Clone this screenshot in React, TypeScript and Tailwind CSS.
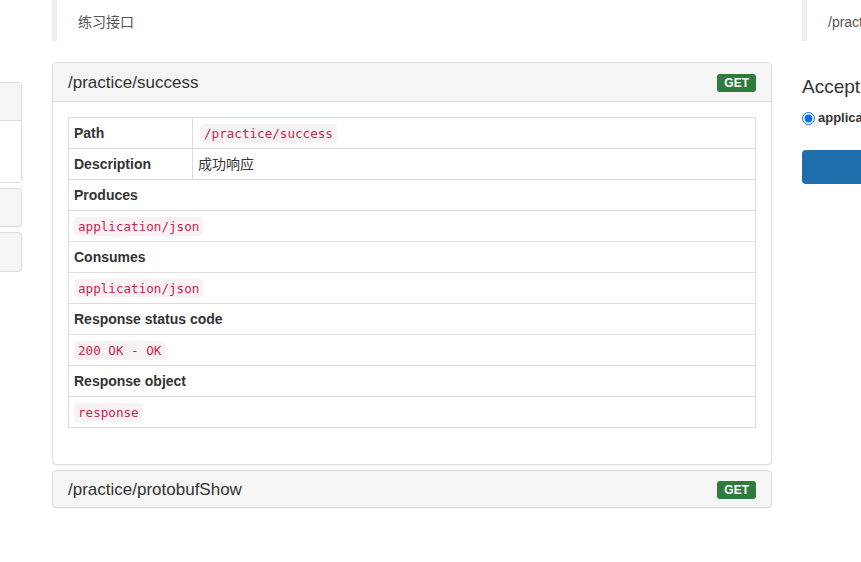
import React from "react";

const mono = { fontFamily: '"DejaVu Sans Mono", "Liberation Mono", monospace' };

function Code({ children }: { children: React.ReactNode }) {
  return (
    <code
      style={mono}
      className="rounded-[4px] bg-[#f9f2f4] px-[4px] py-[2px] text-[12.6px] text-[#c7254e]"
    >
      {children}
    </code>
  );
}

function GetBadge() {
  return (
    <span className="rounded-[3px] bg-[#2f7b3e] px-[7px] py-[3px] text-[12px] font-bold leading-none text-white">
      GET
    </span>
  );
}

function FullRow({ children, bold }: { children: React.ReactNode; bold?: boolean }) {
  return (
    <tr className="border-t border-[#ddd]">
      <td colSpan={2} className={`h-[31px] px-[5px] align-middle ${bold ? "font-bold" : ""}`}>
        {children}
      </td>
    </tr>
  );
}

export default function App() {
  return (
    <div
      className="flex h-[562px] w-[861px] overflow-hidden bg-white text-[14px] leading-[20px] text-[#333]"
      style={{ fontFamily: '"Liberation Sans", Arial, "Noto Sans CJK SC", sans-serif' }}
    >
      {/* left sidebar */}
      <div className="mt-[82px] flex w-[22px] shrink-0 flex-col gap-[5px]">
        <div className="rounded-r-[4px] border border-l-0 border-[#ddd]">
          <div className="h-[38px] border-b border-[#ddd] bg-[#f5f5f5]" />
          <div className="h-[61px] bg-white" />
        </div>
        <div className="h-[39px] rounded-r-[4px] border border-l-0 border-[#ddd] bg-[#f5f5f5]" />
        <div className="h-[40px] rounded-r-[4px] border border-l-0 border-[#ddd] bg-[#f5f5f5]" />
      </div>

      {/* main column */}
      <div className="ml-[30px] flex w-[720px] shrink-0 flex-col">
        <div className="flex h-[41px] items-end border-l-[5px] border-[#eee] pb-[9px] pl-[21px] text-[14px] text-[#555]">
          练习接口
        </div>

        <div className="mt-[21px] rounded-[4px] border border-[#ddd] bg-white shadow-[0_1px_1px_rgba(0,0,0,0.05)]">
          <div className="flex h-[39px] items-center justify-between rounded-t-[4px] border-b border-[#ddd] bg-[#f5f5f5] px-[15px] pt-[1px]">
            <span className="text-[17px] text-[#333]">/practice/success</span>
            <GetBadge />
          </div>
          <div className="px-[15px] pb-[36px] pt-[15px]">
            <table className="w-full border-collapse border border-[#ddd]">
              <tbody>
                <tr>
                  <td className="h-[31px] w-[124px] border-r border-[#ddd] px-[5px] font-bold">Path</td>
                  <td className="px-[7px]">
                    <Code>/practice/success</Code>
                  </td>
                </tr>
                <tr className="border-t border-[#ddd]">
                  <td className="h-[31px] border-r border-[#ddd] px-[5px] font-bold">Description</td>
                  <td className="px-[5px]">成功响应</td>
                </tr>
                <FullRow bold>Produces</FullRow>
                <FullRow>
                  <Code>application/json</Code>
                </FullRow>
                <FullRow bold>Consumes</FullRow>
                <FullRow>
                  <Code>application/json</Code>
                </FullRow>
                <FullRow bold>Response status code</FullRow>
                <FullRow>
                  <Code>200 OK - OK</Code>
                </FullRow>
                <FullRow bold>Response object</FullRow>
                <FullRow>
                  <Code>response</Code>
                </FullRow>
              </tbody>
            </table>
          </div>
        </div>

        <div className="mt-[5px] flex h-[38px] items-center justify-between rounded-[4px] border border-[#ddd] bg-[#f5f5f5] px-[15px] pt-[1px] shadow-[0_1px_1px_rgba(0,0,0,0.05)]">
          <span className="text-[17px] text-[#333]">/practice/protobufShow</span>
          <GetBadge />
        </div>
      </div>

      {/* right column */}
      <div className="ml-[30px] flex min-w-0 flex-1 flex-col overflow-hidden">
        <div className="flex h-[41px] items-end whitespace-nowrap border-l-[5px] border-[#eee] pb-[9px] pl-[21px] text-[14px] text-[#555]">
          /practice/success
        </div>
        <div className="mt-[34px] whitespace-nowrap text-[19px] font-medium leading-[24px] text-[#333]">
          Accept
        </div>
        <label className="mt-[9px] flex items-center gap-[3px] whitespace-nowrap text-[13px] font-bold">
          <input type="radio" defaultChecked className="m-0 h-[13px] w-[13px] accent-[#0a6cf5]" />
          application/json
        </label>
        <div className="mt-[22px] h-[34px] w-[200px] rounded-[4px] bg-[#1f6fad]" />
      </div>
    </div>
  );
}
